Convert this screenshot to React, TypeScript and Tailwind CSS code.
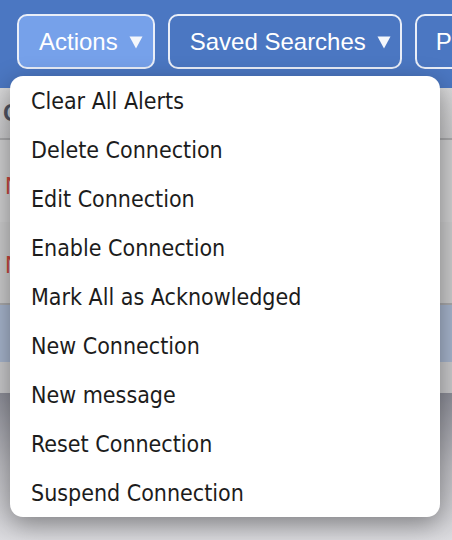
import React from 'react';

const actions = [
  'Clear All Alerts',
  'Delete Connection',
  'Edit Connection',
  'Enable Connection',
  'Mark All as Acknowledged',
  'New Connection',
  'New message',
  'Reset Connection',
  'Suspend Connection',
];

function Caret() {
  return (
    <svg width="14" height="14" viewBox="0 0 14 14" className="ml-[11px] shrink-0">
      <path d="M0.5 1.5 H13.5 L7 13.5 Z" fill="#f4f7fc" />
    </svg>
  );
}

export default function App() {
  return (
    <div className="relative w-[452px] h-[540px] overflow-hidden bg-[#d2d2d4] font-['Liberation_Sans',Arial,sans-serif]">
      {/* toolbar */}
      <div className="h-[88px] bg-[#4b77c2] flex gap-[13px] pt-[14px] pl-[17px] whitespace-nowrap">
        <button className="h-[55px] flex items-center shrink-0 rounded-[10px] border-2 border-[#e9eef8] bg-[#76a1ea] pl-[20px] pr-[10px] text-[24px] text-white">
          Actions
          <Caret />
        </button>
        <button className="h-[55px] flex items-center shrink-0 rounded-[10px] border-2 border-[#e9eef8] bg-[#4b77c2] pl-[20px] pr-[9px] text-[24px] text-white">
          Saved Searches
          <Caret />
        </button>
        <button className="h-[55px] flex items-center shrink-0 rounded-[10px] border-2 border-[#e9eef8] bg-[#4b77c2] pl-[19px] pr-[12px] text-[24px] text-white">
          Preferences
        </button>
      </div>

      {/* page behind the menu */}
      <div className="h-[52px] border-b-2 border-[#a9a9ab] bg-gradient-to-b from-[#d9d9da] to-[#c9c9cb] flex items-center pl-[3px] text-[24px] font-bold text-[#505462]">
        C
      </div>
      <div className="h-[82px] bg-[#cfcfd0] flex items-center pl-[5px] pt-[10px] text-[24px] text-[#c6463b]">
        N
      </div>
      <div className="h-[83px] border-b-2 border-[#a9a9ab] bg-[#cbcbcc] flex items-center pl-[5px] pt-[4px] text-[24px] text-[#c6463b]">
        N
      </div>
      <div className="h-[57px] bg-[#a6b4cc]" />
      <div className="h-[31px] bg-[#c9c9cb]" />
      <div className="h-[147px] bg-gradient-to-b from-[#8d8e98] via-[#bdbdc2] to-[#dcdce0]" />

      {/* actions menu */}
      <div className="absolute left-[10px] top-[76px] w-[430px] rounded-[13px] bg-white shadow-[0_8px_26px_rgba(0,0,0,0.38)] overflow-hidden">
        {actions.map(a => (
          <div
            key={a}
            className="h-[49px] flex items-center pl-[21px] pt-[2px] text-[23px] text-[#1c1c1c] font-['DejaVu_Sans_Condensed','DejaVu_Sans',sans-serif] [font-stretch:condensed]"
          >
            {a}
          </div>
        ))}
      </div>
    </div>
  );
}
